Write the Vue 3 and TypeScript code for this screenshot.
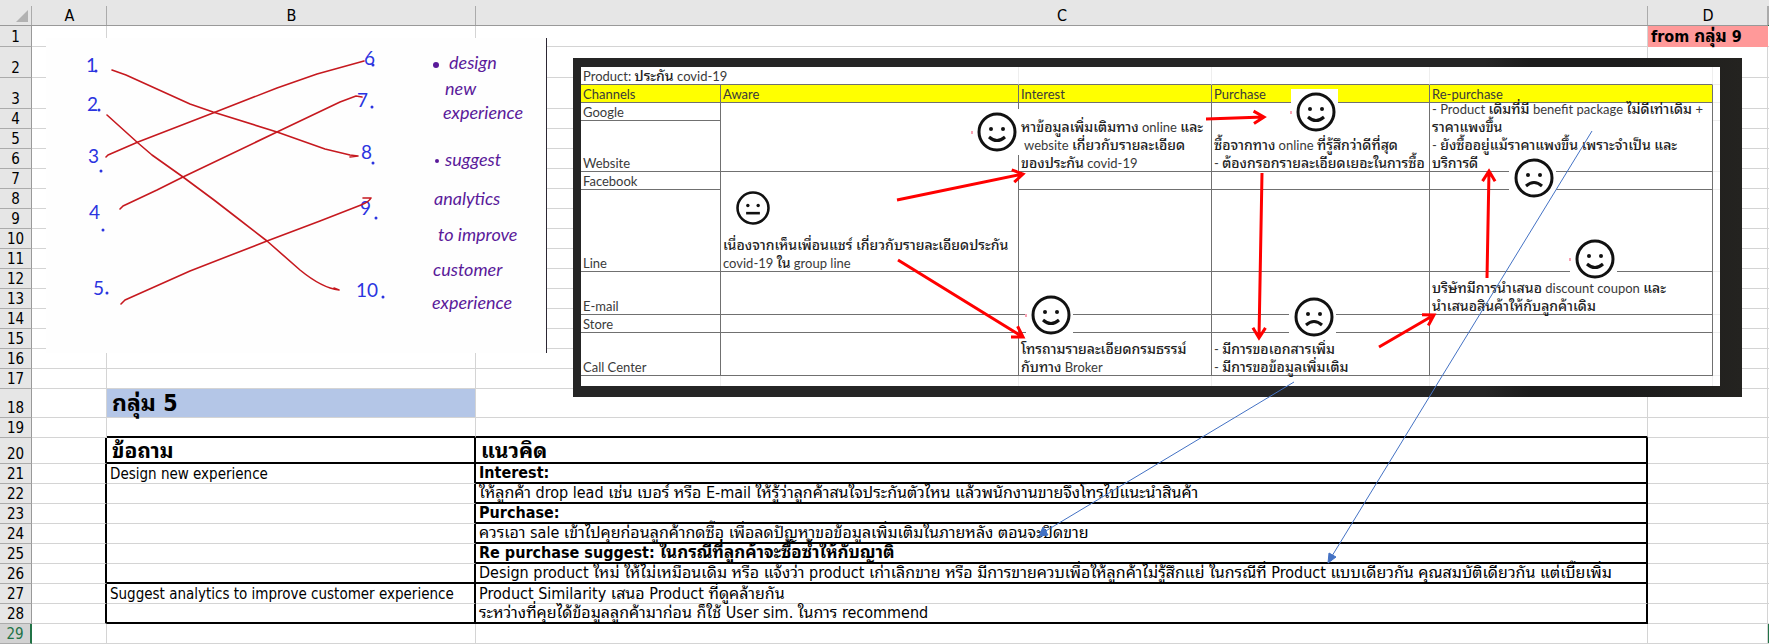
<script setup lang="ts">
interface SheetRow {
  n: number
  h: number
  b?: string
  c?: string
  d?: string
  kind?: string
}

const plain = (n: number, h = 20): SheetRow => ({ n, h })

const rows: SheetRow[] = [
  { n: 1, h: 21, d: 'from กลุ่ม 9' },
  plain(2, 31),
  plain(3, 31),
  ...Array.from({ length: 14 }, (_, i) => plain(i + 4)),
  { n: 18, h: 29, b: 'กลุ่ม 5', kind: 'group' },
  { n: 19, h: 20, kind: 'above' },
  { n: 20, h: 26, b: 'ข้อถาม', c: 'แนวคิด', kind: 'boxed title ruled' },
  { n: 21, h: 20, b: 'Design new experience', c: 'Interest:', kind: 'boxed strong lined' },
  { n: 22, h: 20, c: 'ให้ลูกค้า drop lead เช่น เบอร์ หรือ E-mail ให้รู้ว่าลูกค้าสนใจประกันตัวไหน แล้วพนักงานขายจึงโทรไปแนะนำสินค้า', kind: 'boxed lined' },
  { n: 23, h: 20, c: 'Purchase:', kind: 'boxed strong lined' },
  { n: 24, h: 20, c: 'ควรเอา sale เข้าไปคุยก่อนลูกค้ากดซื้อ เพื่อลดปัญหาขอข้อมูลเพิ่มเติมในภายหลัง ตอนจะปิดขาย', kind: 'boxed lined' },
  { n: 25, h: 20, c: 'Re purchase suggest: ในกรณีที่ลูกค้าจะซื้อซ้ำให้กับญาติ', kind: 'boxed strong lined' },
  { n: 26, h: 20, c: 'Design product ใหม่ ให้ไม่เหมือนเดิม หรือ แจ้งว่า product เก่าเลิกขาย หรือ มีการขายควบเพื่อให้ลูกค้าไม่รู้สึกแย่ ในกรณีที่ Product แบบเดียวกัน คุณสมบัติเดียวกัน แต่เบี้ยเพิ่ม', kind: 'boxed ruled' },
  { n: 27, h: 20, b: 'Suggest analytics to improve customer experience', c: 'Product Similarity เสนอ Product ที่ดูคล้ายกัน', kind: 'boxed' },
  { n: 28, h: 20, c: 'ระหว่างที่คุยได้ข้อมูลลูกค้ามาก่อน ก็ใช้ User sim. ในการ recommend', kind: 'boxed ruled' },
  { n: 29, h: 20, kind: 'active' },
]

/* Splits a string into Thai and Latin runs so that each script gets its own size. */
interface Run {
  text: string
  thai: boolean
}
function runs(text = ''): Run[] {
  return (text.match(/[\u0E00-\u0E7F]+(?: [\u0E00-\u0E7F]+)*|[^\u0E00-\u0E7F]+/g) ?? []).map((t) => ({
    text: t,
    thai: /[\u0E00-\u0E7F]/.test(t),
  }))
}

interface JourneyCell {
  lines: string[]
  span?: number
}
interface JourneyRow {
  channel: string
  h: number
  cells: JourneyCell[]
}

const empty = (span = 1): JourneyCell => ({ lines: [], span })

const journey: JourneyRow[] = [
  {
    channel: 'Google',
    h: 18,
    cells: [
      empty(2),
      { lines: ['หาข้อมูลเพิ่มเติมทาง online และ', ' website เกี่ยวกับรายละเอียด', 'ของประกัน covid-19'], span: 2 },
      { lines: ['ซื้อจากทาง online ที่รู้สึกว่าดีที่สุด', '- ต้องกรอกรายละเอียดเยอะในการซื้อ'], span: 2 },
      { lines: ['- Product เดิมที่มี benefit package ไม่ดีเท่าเดิม +', 'ราคาแพงขึ้น', '- ยังซื้ออยู่แม้ราคาแพงขึ้น เพราะจำเป็น และ', 'บริการดี'], span: 2 },
    ],
  },
  { channel: 'Website', h: 51, cells: [] },
  {
    channel: 'Facebook',
    h: 18,
    cells: [
      { lines: ['เนื่องจากเห็นเพื่อนแชร์ เกี่ยวกับรายละเอียดประกัน', 'covid-19 ใน group line'], span: 2 },
      empty(),
      empty(),
      empty(),
    ],
  },
  { channel: 'Line', h: 82, cells: [empty(), empty(), empty()] },
  {
    channel: 'E-mail',
    h: 43,
    cells: [empty(), empty(), empty(), { lines: ['บริษัทมีการนำเสนอ discount coupon และ', 'นำเสนอสินค้าให้กับลูกค้าเดิม'] }],
  },
  { channel: 'Store', h: 18, cells: [empty(), empty(), empty(), empty()] },
  {
    channel: 'Call Center',
    h: 43,
    cells: [
      empty(),
      { lines: ['โทรถามรายละเอียดกรมธรรม์', 'กับทาง Broker'] },
      { lines: ['- มีการขอเอกสารเพิ่ม', '- มีการขอข้อมูลเพิ่มเติม'] },
      empty(),
    ],
  },
]

type Mood = 'happy' | 'sad' | 'neutral'
const mouths: Record<Mood, string> = {
  happy: 'M-8 5Q0 12 8 5',
  sad: 'M-8 8Q0 1 8 8',
  neutral: 'M-8 6H8',
}
const faces: { x: number; y: number; mood: Mood; s: number; dot: boolean }[] = [
  { x: 424, y: 74, mood: 'happy', s: 1, dot: true },
  { x: 180, y: 150, mood: 'neutral', s: 0.86, dot: false },
  { x: 743, y: 54, mood: 'happy', s: 1, dot: true },
  { x: 961, y: 120, mood: 'sad', s: 1, dot: false },
  { x: 1022, y: 201, mood: 'happy', s: 1, dot: true },
  { x: 478, y: 257, mood: 'happy', s: 1, dot: true },
  { x: 741, y: 259, mood: 'sad', s: 1, dot: false },
]

function arrow(x1: number, y1: number, x2: number, y2: number): string {
  const a = Math.atan2(y2 - y1, x2 - x1)
  const wing = (d: number) => `${x2 - 12 * Math.cos(a + d)} ${y2 - 12 * Math.sin(a + d)}`
  return `M${x1} ${y1}L${x2} ${y2}M${wing(0.55)}L${x2} ${y2}L${wing(-0.55)}`
}
const arrows = [
  arrow(324, 142, 450, 116),
  arrow(325, 202, 450, 279),
  arrow(633, 61, 691, 59),
  arrow(689, 115, 686, 280),
  arrow(806, 289, 861, 257),
  arrow(914, 220, 916, 113),
]

const numbers = [
  { t: '1', x: 86, y: 72, dx: 96, dy: 71 },
  { t: '2', x: 87, y: 111, dx: 99, dy: 110 },
  { t: '3', x: 88, y: 163, dx: 101, dy: 171 },
  { t: '4', x: 89, y: 219, dx: 103, dy: 230 },
  { t: '5', x: 93, y: 295, dx: 107, dy: 293 },
  { t: '6', x: 364, y: 65, dx: 373, dy: 65 },
  { t: '7', x: 357, y: 107, dx: 372, dy: 107 },
  { t: '8', x: 361, y: 159, dx: 373, dy: 163 },
  { t: '9', x: 360, y: 215, dx: 376, dy: 218 },
  { t: '10', x: 356, y: 297, dx: 383, dy: 297 },
]
const notes = [
  { t: 'design', x: 449, y: 69 },
  { t: 'new', x: 445, y: 95 },
  { t: 'experience', x: 443, y: 119 },
  { t: 'suggest', x: 445, y: 166 },
  { t: 'analytics', x: 434, y: 205 },
  { t: 'to improve', x: 438, y: 241 },
  { t: 'customer', x: 433, y: 276 },
  { t: 'experience', x: 432, y: 309 },
]
</script>

<template>
  <main class="workbook">
    <table class="sheet">
      <colgroup>
        <col class="w-head" /><col class="w-a" /><col class="w-b" /><col /><col class="w-d" /><col class="w-e" />
      </colgroup>
      <thead>
        <tr>
          <th class="corner"><svg width="12" height="12" viewBox="0 0 12 12"><path d="M12 0V12H0Z" fill="#b2b2b2" /></svg></th>
          <th scope="col">A</th>
          <th scope="col">B</th>
          <th scope="col">C</th>
          <th scope="col">D</th>
          <th class="edge"></th>
        </tr>
      </thead>
      <tbody>
        <tr v-for="r in rows" :key="r.n" :class="r.kind" :style="{ height: r.h + 'px' }">
          <th scope="row">{{ r.n }}</th>
          <td class="a"></td>
          <td class="b"><div><span v-for="(s, i) in runs(r.b)" :key="i" :class="{ th: s.thai }">{{ s.text }}</span></div></td>
          <td class="c"><div><span v-for="(s, i) in runs(r.c)" :key="i" :class="{ th: s.thai }">{{ s.text }}</span></div></td>
          <td class="d" :class="{ tag: r.d }"><div><span v-for="(s, i) in runs(r.d)" :key="i" :class="{ th: s.thai }">{{ s.text }}</span></div></td>
          <td class="e"></td>
        </tr>
      </tbody>
    </table>

    <svg class="sketch" width="501" height="315" viewBox="46 38 501 315" role="img" aria-label="Matching notes">
      <rect x="46" y="38" width="501" height="315" fill="#fefefe" />
      <rect x="546" y="38" width="1" height="315" fill="#2c2733" />
      <g class="ink">
        <template v-for="n in numbers" :key="n.t">
          <text :x="n.x" :y="n.y">{{ n.t }}</text>
          <circle :cx="n.dx" :cy="n.dy" r="1.5" />
        </template>
      </g>
      <g class="note">
        <circle cx="436" cy="65" r="3" />
        <circle cx="437" cy="161" r="2" />
        <text v-for="(n, i) in notes" :key="i" :x="n.x" :y="n.y">{{ n.t }}</text>
      </g>
      <g class="strokes">
        <path d="M112 70L126 75L190 104L213 112L277 132L325 149L350 155L358 156M350 157L358 156" />
        <path d="M107 115L138 143L152 155L183 177L214 200L236 217L267 241L300 270Q322 288 339 290M334 288L339 290" />
        <path d="M106 157L108 155L138 142L213 113L277 88L317 74L364 61" />
        <path d="M120 209L123 206L157 190L183 177L277 132L340 102L356 96L362 97" />
        <path d="M121 304L125 300L190 271L267 241L320 221L361 205Q369 202 371 198L363 198" />
      </g>
    </svg>

    <section class="photo">
      <table class="journey">
        <colgroup>
          <col class="j1" /><col class="j2" /><col class="j3" /><col class="j4" /><col class="j5" /><col class="j6" />
        </colgroup>
        <thead>
          <tr class="top">
            <td colspan="2">Product: <span class="th">ประกัน</span> covid-19</td>
            <td></td><td></td><td></td><td class="rest"></td>
          </tr>
          <tr class="heads">
            <th scope="col">Channels</th>
            <th scope="col">Aware</th>
            <th scope="col">Interest</th>
            <th scope="col">Purchase</th>
            <th scope="col">Re-purchase</th>
            <td class="rest"></td>
          </tr>
        </thead>
        <tbody>
          <tr v-for="r in journey" :key="r.channel" :style="{ height: r.h + 'px' }">
            <th scope="row">{{ r.channel }}</th>
            <td v-for="(c, i) in r.cells" :key="i" :rowspan="c.span">
              <div class="lines">
                <p v-for="l in c.lines" :key="l"><span v-for="(s, k) in runs(l)" :key="k" :class="{ th: s.thai }">{{ s.text }}</span></p>
              </div>
            </td>
            <td class="rest"></td>
          </tr>
          <tr class="foot"><td></td><td></td><td></td><td></td><td></td><td class="rest"></td></tr>
        </tbody>
      </table>
      <svg class="marks" width="1169" height="339" viewBox="0 0 1169 339" aria-hidden="true">
        <g v-for="(f, i) in faces" :key="i" :transform="`translate(${f.x} ${f.y})`">
          <rect x="-25" y="-23" width="47" height="46" fill="#fff" />
          <rect v-if="f.dot" x="-26" y="-1" width="2" height="3" fill="#f9a3b4" />
          <g :transform="`scale(${f.s})`">
            <circle r="18" fill="#fff" stroke="#111" stroke-width="3" />
            <circle cx="-6" cy="-3" r="2" fill="#111" />
            <circle cx="6" cy="-3" r="2" fill="#111" />
            <path :d="mouths[f.mood]" fill="none" stroke="#111" stroke-width="3" />
          </g>
        </g>
        <path v-for="a in arrows" :key="a" :d="a" class="red" />
      </svg>
    </section>

    <svg class="links" width="1769" height="644" viewBox="0 0 1769 644" aria-hidden="true">
      <path d="M1294 382L1044 532M1592 131L1332 556" />
      <path class="tip" d="M1039 536L1043 527L1048 535ZM1328 563L1329 553L1336 557Z" />
    </svg>
  </main>
</template>

<style>
body {
  margin: 0;
  background: #fff;
}
</style>

<style scoped>
.workbook {
  position: relative;
  overflow: hidden;
  font-family: 'DejaVu Sans Condensed', 'Noto Sans Thai Looped', Waree, Loma, Garuda, 'Noto Sans', sans-serif;
  font-size: 15px;
  color: #000;
}
table {
  table-layout: fixed;
  border-collapse: separate;
  border-spacing: 0;
}
th,
td {
  box-sizing: border-box;
  padding: 0;
  font-weight: 400;
}
.sheet {
  width: 100%;
}
.w-head { width: 32px; }
.w-a { width: 75px; }
.w-b { width: 369px; }
.w-d { width: 120px; }
.w-e { width: 1px; }

.sheet thead tr { height: 26px; }
.sheet thead th {
  background: linear-gradient(#ababab, #ababab) right bottom / 1px 19px no-repeat #e6e6e6;
  border-bottom: 1px solid #999;
  font-size: 16px;
  line-height: 18px;
  vertical-align: bottom;
}
.sheet thead .corner {
  text-align: right;
  padding: 0 4px 3px 0;
  line-height: 0;
}
.sheet thead .edge { border-bottom-color: #217346; }
.sheet tbody th {
  background: #e6e6e6;
  border-right: 1px solid #999;
  border-bottom: 1px solid #ababab;
  line-height: 18px;
  vertical-align: bottom;
}
.sheet tbody td {
  border-right: 1px solid #d4d4d4;
  border-bottom: 1px solid #d4d4d4;
  vertical-align: bottom;
}
.sheet tbody td div {
  height: 18px;
  line-height: 18px;
  padding-left: 3px;
  white-space: pre;
}
.sheet .c { font-size: 16px; }
.sheet .th {
  font-size: 16px;
  line-height: 0;
}
.sheet tbody td.e { border-right: 0; }
.sheet tbody td.tag {
  background: #ff9999;
  border-color: #ff9999;
  font-size: 16px;
  font-weight: 700;
}
.group .b {
  background: #b4c6e7;
}
.sheet .group .b div {
  height: 28px;
  line-height: 29px;
  padding-left: 5px;
  font-size: 23px;
  font-weight: 700;
}
.sheet .group .th { font-size: 23px; }
.sheet .title .th { font-size: 21px; }
.sheet .strong .th,
.sheet .tag .th { font-size: 17px; }
.sheet .above .b,
.sheet .above .c,
.sheet .ruled .b,
.sheet .ruled .c,
.sheet .lined .c {
  border-bottom: 2px solid #000;
}
.sheet .boxed .a,
.sheet .boxed .b,
.sheet .boxed .c {
  border-right: 2px solid #000;
}
.title .b,
.title .c { font-weight: 700; }
.sheet .title td div {
  height: 24px;
  line-height: 30px;
  padding-left: 5px;
}
.strong .c { font-weight: 700; }
.sheet .active th {
  background: #d2d2d2;
  color: #217346;
  border-right: 2px solid #217346;
}
.sheet .active .e { background: #217346; }

.sketch {
  position: absolute;
  left: 46px;
  top: 38px;
}
.ink {
  fill: #2b34e0;
  font: 19px Lato, sans-serif;
}
.note {
  fill: #5a1a9a;
  font: italic 18px Lato, sans-serif;
}
.strokes {
  fill: none;
  stroke: #c6191f;
  stroke-width: 1.6;
  stroke-linejoin: round;
  stroke-linecap: round;
}

.photo {
  position: absolute;
  left: 573px;
  top: 58px;
  padding: 9px 22px 11px 8px;
  background: linear-gradient(90deg, #252525 78%, #1c1c1c 82%, #1c1c1c 90%, #242320);
}
.journey {
  width: 1139px;
  background: #fff;
  color: #3a3a3a;
  font: 13px Lato, 'Noto Sans Thai Looped', Waree, Loma, Garuda, sans-serif;
}
.journey .th {
  color: #222;
  font-size: 14px;
  font-weight: 500;
  line-height: 0;
}
.j1 { width: 140px; }
.j2 { width: 298px; }
.j3 { width: 193px; }
.j4 { width: 218px; }
.j5 { width: 283px; }
.j6 { width: 7px; }
.journey th,
.journey td {
  border-right: 1px solid #707070;
  border-bottom: 1px solid #707070;
  padding-left: 2px;
  line-height: 15px;
  text-align: left;
  vertical-align: bottom;
  white-space: nowrap;
}
.journey .top td { border-right-color: #eee; }
.journey tr.top,
.journey tr.heads { height: 18px; }
.journey .heads th { background: #ff0; }
.journey .foot { height: 10px; }
.journey .foot td {
  border-right-color: #eee;
  border-bottom: 0;
}
.journey td.rest {
  padding: 0;
  border-right: 0;
  border-bottom-color: #eee;
}
.lines {
  margin: -6px 0 -1px;
  line-height: 18px;
}
.lines p {
  margin: 0;
  white-space: pre;
}
.marks {
  position: absolute;
  left: 0;
  top: 0;
}
.red {
  fill: none;
  stroke: #f00;
  stroke-width: 3;
}
.links {
  position: absolute;
  left: 0;
  top: 0;
  fill: none;
  stroke: #4472c4;
  stroke-width: 1;
  pointer-events: none;
}
.tip { fill: #4472c4; }
</style>
